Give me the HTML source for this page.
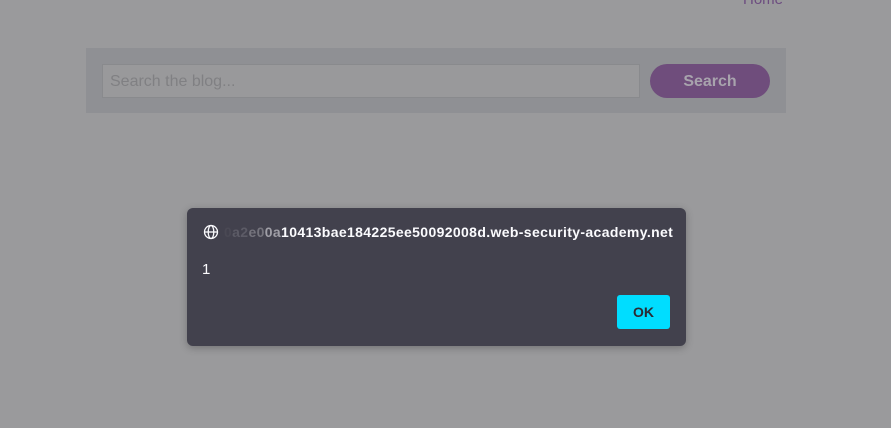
<!DOCTYPE html>
<html><head><style>
html,body{margin:0;padding:0;width:891px;height:428px;background:#9a9a9c;overflow:hidden;font-family:"Liberation Sans",sans-serif;position:relative}
.home{position:absolute;left:743px;top:-9px;color:#6d4d80;font-size:15px}
.bar{position:absolute;left:86px;top:48px;width:700px;height:65px;background:#8f9094}
.inp{position:absolute;left:102px;top:64px;width:536px;height:32px;border:1px solid #898a8d;background:#99999b;box-sizing:content-box}
.inp span{position:absolute;left:7px;top:8px;font-size:16px;color:#808083}
.btn{position:absolute;left:650px;top:64px;width:120px;height:34px;border-radius:17px;background:#6f4d7c;color:#a8a3ad;font-weight:bold;font-size:16px;text-align:center;line-height:35px}
.dlg{position:absolute;left:187px;top:208px;width:499px;height:138px;background:#42414d;border-radius:6px;box-shadow:0 2px 8px rgba(0,0,0,.25);font-family:"Liberation Sans",sans-serif;color:#fbfbfe}
.host{position:absolute;left:37px;top:16px;font-size:14px;font-weight:bold;white-space:nowrap;letter-spacing:0.36px}
.host .f0{color:#4a4954}.host .f1{color:#5c5b66}.host .f2{color:#75747d}.host .f3{color:#a09fa7}
.one{position:absolute;left:15px;top:53px;font-size:15px}
.ok{position:absolute;left:430px;top:87px;width:53px;height:34px;background:#00ddff;border-radius:3px;color:#2b2a33;font-weight:bold;font-size:14px;text-align:center;line-height:34px}
</style></head><body>
<div class="home">Home</div>
<div class="bar"></div>
<div class="inp"><span>Search the blog...</span></div>
<div class="btn">Search</div>
<div class="dlg">
<svg style="position:absolute;left:16px;top:16px" width="16" height="16" viewBox="0 0 16 16" fill="none" stroke="#fbfbfe" stroke-width="1.3"><circle cx="8" cy="8" r="6.5"/><ellipse cx="8" cy="8" rx="2.8" ry="6.5"/><path d="M1.5 8h13"/></svg>
<div class="host"><span class="f0">0</span><span class="f1">a2</span><span class="f2">e0</span><span class="f3">0a</span>10413bae184225ee50092008d.web-security-academy.net</div>
<div class="one">1</div>
<div class="ok">OK</div>
</div>
</body></html>
